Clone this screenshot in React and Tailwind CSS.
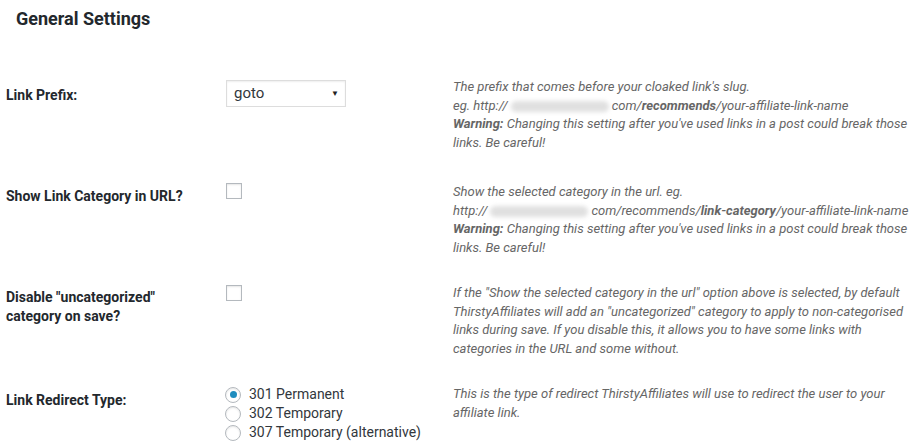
const desc = 'text-[13px] leading-[18.5px] italic text-[#666]'

function Blur({ w }) {
  return <span className={`inline-block h-[11px] align-middle rounded-full bg-[#e0e0e0] blur-[2px] ${w}`} />
}

function Checkbox() {
  return <span className="block w-4 h-4 border border-[#b4b9be] bg-white shadow-[inset_0_1px_2px_rgba(0,0,0,0.1)]" />
}

function Radio({ checked, label }) {
  return (
    <div className="flex items-center gap-[8px] h-[19px]">
      <span className="w-4 h-4 rounded-full border border-[#b4b9be] bg-white shadow-[inset_0_1px_2px_rgba(0,0,0,0.1)] flex items-center justify-center">
        {checked && <span className="w-[7px] h-[7px] rounded-full bg-[#1e8cbe]" />}
      </span>
      <span className="text-[14px] text-[#32373c]">{label}</span>
    </div>
  )
}

export default function App() {
  return (
    <div className="w-[913px] h-[446px] bg-white overflow-hidden text-[#23282d]" style={{ fontFamily: 'Roboto, sans-serif' }}>
      <h2 className="pl-[16px] pt-[7px] text-[18px] leading-[24px] font-bold">General Settings</h2>

      <div className="mt-[47px] pl-[6px]">
        {/* Link Prefix */}
        <div className="grid grid-cols-[220px_227px_1fr] mb-[31px]">
          <div className="pt-[8px] text-[14px] font-bold leading-[19px]">Link Prefix:</div>
          <div className="pt-[2px]">
            <div className="w-[120px] h-[27px] border border-[#ddd] shadow-[inset_0_1px_2px_rgba(0,0,0,0.07)] flex items-center justify-between pl-[7px] pr-[6px]">
              <span className="text-[15px] text-[#32373c]">goto</span>
              <span className="text-[8px] text-[#222]">▼</span>
            </div>
          </div>
          <div className={desc}>
            <div>The prefix that comes before your cloaked link's slug.</div>
            <div className="whitespace-nowrap">eg. http://<Blur w="w-[98px] mx-[3px]" />com/<b>recommends</b>/your-affiliate-link-name</div>
            <div className="whitespace-nowrap"><b>Warning:</b> Changing this setting after you've used links in a post could break those</div>
            <div>links. Be careful!</div>
          </div>
        </div>

        {/* Show Link Category */}
        <div className="grid grid-cols-[220px_227px_1fr] mb-[27px]">
          <div className="pt-[4px] text-[14px] font-bold leading-[19px]">Show Link Category in URL?</div>
          <div><Checkbox /></div>
          <div className={desc}>
            <div>Show the selected category in the url. eg.</div>
            <div className="whitespace-nowrap">http://<Blur w="w-[98px] mx-[3px]" />com/recommends/<b>link-category</b>/your-affiliate-link-name</div>
            <div className="whitespace-nowrap"><b>Warning:</b> Changing this setting after you've used links in a post could break those</div>
            <div>links. Be careful!</div>
          </div>
        </div>

        {/* Disable uncategorized */}
        <div className="grid grid-cols-[220px_227px_1fr] mb-[27px]">
          <div className="pt-[4px] text-[14px] font-bold leading-[19px]">Disable "uncategorized"<br />category on save?</div>
          <div className="pt-[1px]"><Checkbox /></div>
          <div className={desc}>
            <div className="whitespace-nowrap">If the "Show the selected category in the url" option above is selected, by default</div>
            <div className="whitespace-nowrap">ThirstyAffiliates will add an "uncategorized" category to apply to non-categorised</div>
            <div className="whitespace-nowrap">links during save. If you disable this, it allows you to have some links with</div>
            <div>categories in the URL and some without.</div>
          </div>
        </div>

        {/* Redirect type */}
        <div className="grid grid-cols-[220px_227px_1fr]">
          <div className="pt-[6px] text-[14px] font-bold leading-[19px]">Link Redirect Type:</div>
          <div className="-ml-[1px]">
            <Radio checked label="301 Permanent" />
            <Radio label="302 Temporary" />
            <Radio label="307 Temporary (alternative)" />
          </div>
          <div className={desc}>
            <div className="whitespace-nowrap">This is the type of redirect ThirstyAffiliates will use to redirect the user to your</div>
            <div>affiliate link.</div>
          </div>
        </div>
      </div>
    </div>
  )
}
